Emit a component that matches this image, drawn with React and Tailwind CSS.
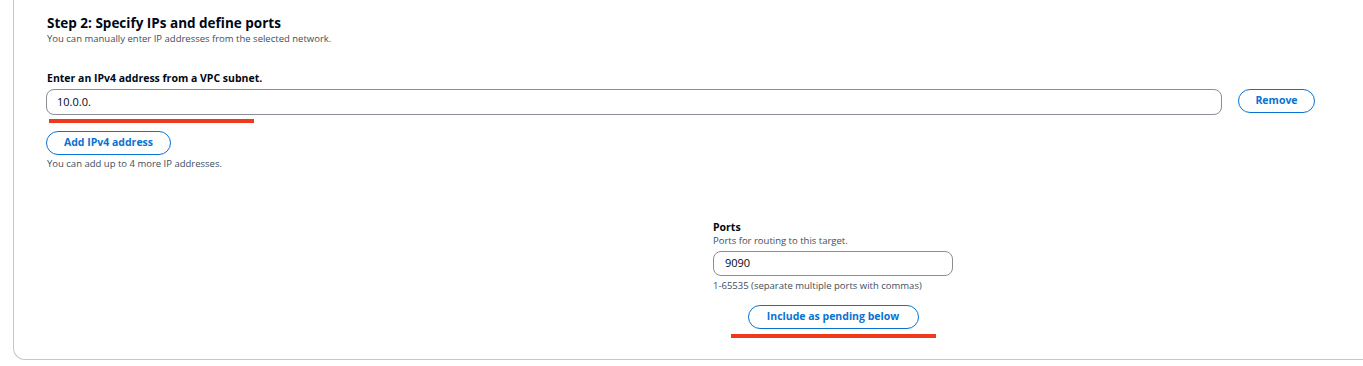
export default function App() {
  return (
    <div className="w-full h-[366px] overflow-hidden bg-white" style={{ fontFamily: '"Open Sans", "Noto Sans", sans-serif' }}>
      <div className="ml-[13px] w-[1400px] border-l border-r border-b border-[#c6c6cd] rounded-bl-[12px] rounded-br-[12px] pl-[33px] pr-[33px] pt-[14px] pb-[21px] text-[#000716]">
        {/* Header */}
        <h2 className="text-[13.5px] leading-[18px] font-bold">Step 2: Specify IPs and define ports</h2>
        <p className="text-[9.5px] leading-[14px] text-[#414d5c]">You can manually enter IP addresses from the selected network.</p>

        {/* IPv4 entry */}
        <div className="mt-[25px] text-[10.5px] leading-[14px] font-bold">Enter an IPv4 address from a VPC subnet.</div>
        <div className="mt-[4px] flex items-start gap-[16px]">
          <div className="-ml-px w-[1176px] h-[26px] rounded-[8px] border border-[#8c8c94] flex items-center px-[10px] text-[11px]">10.0.0.</div>
          <button className="h-[24px] w-[77px] rounded-full border border-[#0972d3] text-[#0972d3] text-[10.5px] font-bold">Remove</button>
        </div>
        <div className="mt-[4px] ml-[2px] w-[205px] h-[4px] bg-[#f0391c]" />
        <button className="mt-[8px] -ml-px h-[24px] w-[125px] rounded-full border border-[#0972d3] text-[#0972d3] text-[10.5px] font-bold">Add IPv4 address</button>
        <p className="mt-[3px] text-[9.5px] leading-[12px] text-[#414d5c]">You can add up to 4 more IP addresses.</p>

        {/* Ports */}
        <div className="mt-[50px] grid grid-cols-2">
          <div />
          <div className="w-[240px] flex flex-col">
            <div className="text-[10.5px] leading-[14px] font-bold">Ports</div>
            <div className="text-[9.5px] leading-[14px] text-[#414d5c]">Ports for routing to this target.</div>
            <div className="mt-[3px] h-[25px] rounded-[8px] border border-[#8c8c94] flex items-center px-[11px] text-[11px]">9090</div>
            <div className="mt-[4px] text-[9.5px] leading-[12px] text-[#414d5c] whitespace-nowrap">1-65535 (separate multiple ports with commas)</div>
            <button className="mt-[13px] self-center h-[24px] w-[171px] rounded-full border border-[#0972d3] text-[#0972d3] text-[10.5px] font-bold">Include as pending below</button>
            <div className="mt-[5px] self-center w-[205px] h-[4px] bg-[#f0391c]" />
          </div>
        </div>
      </div>
    </div>
  );
}
